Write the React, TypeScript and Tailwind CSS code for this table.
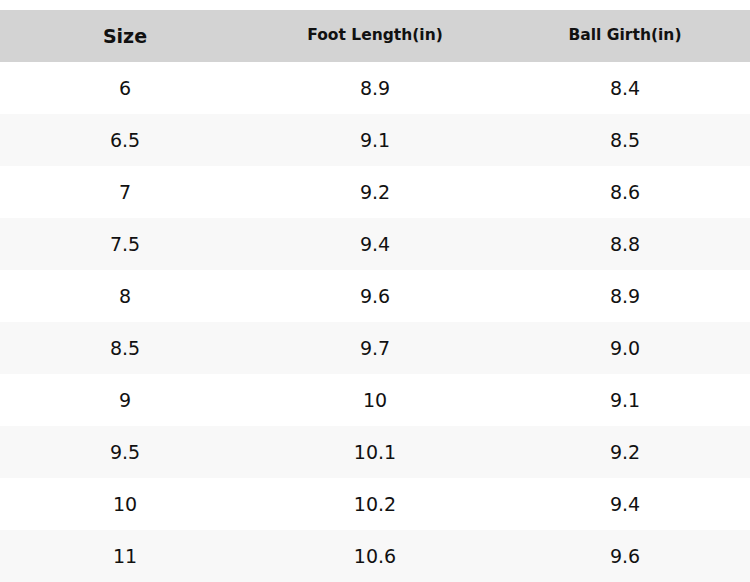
const rows: [string, string, string][] = [
  ["6", "8.9", "8.4"],
  ["6.5", "9.1", "8.5"],
  ["7", "9.2", "8.6"],
  ["7.5", "9.4", "8.8"],
  ["8", "9.6", "8.9"],
  ["8.5", "9.7", "9.0"],
  ["9", "10", "9.1"],
  ["9.5", "10.1", "9.2"],
  ["10", "10.2", "9.4"],
  ["11", "10.6", "9.6"],
];

export default function App() {
  return (
    <div className="w-[750px] bg-white pt-[10px] font-['DejaVu_Sans',sans-serif] text-[#111]">
      <div className="grid h-[52px] grid-cols-3 items-center bg-[#d3d3d3] text-center font-bold">
        <span className="text-[19px]">Size</span>
        <span className="text-[15.5px]">Foot Length(in)</span>
        <span className="text-[15.5px]">Ball Girth(in)</span>
      </div>
      {rows.map((r, i) => (
        <div
          key={r[0]}
          className={`grid h-[52px] grid-cols-3 items-center text-center text-[19px] ${
            i % 2 === 1 ? "bg-[#f8f8f8]" : "bg-white"
          }`}
        >
          <span>{r[0]}</span>
          <span>{r[1]}</span>
          <span>{r[2]}</span>
        </div>
      ))}
    </div>
  );
}
